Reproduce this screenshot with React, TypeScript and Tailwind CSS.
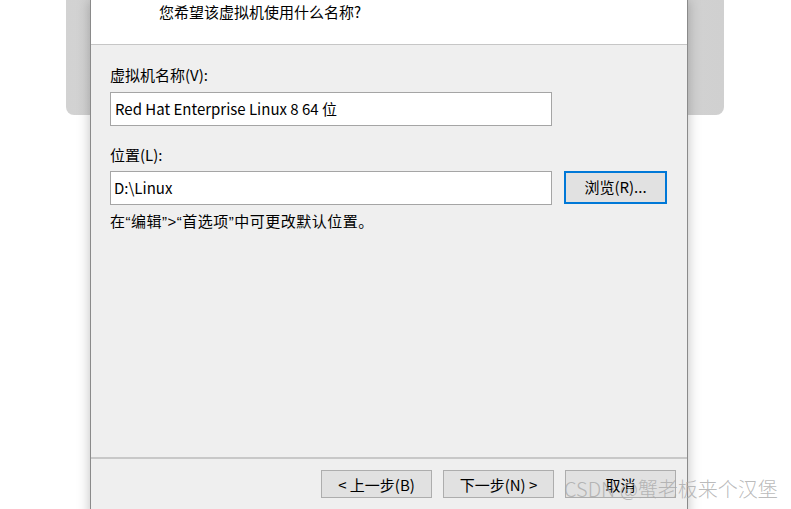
import React from 'react';

const font = { fontFamily: '"Segoe UI", "Noto Sans CJK SC", "Noto Sans", sans-serif' };

const DialogButton = ({ label }: { label: string }) => (
  <button className="h-[28px] w-[111px] border border-[#adadad] bg-[#e1e1e1] text-[15px] leading-none text-black">
    {label}
  </button>
);

// half-width quote marks like the Windows UI font
const Q = ({ children }: { children: React.ReactNode }) => (
  <span className="font-['Liberation_Sans',sans-serif]">{children}</span>
);

const App = () => {
  return (
    <div className="relative h-[509px] w-[791px] overflow-hidden bg-white" style={font}>
      {/* window behind the dialog */}
      <div className="absolute left-[66px] top-0 h-[115px] w-[658px] rounded-b-[8px] bg-gradient-to-r from-[#d2d2d2] via-[#dcdcdc] to-[#d0d0d0]" />

      <div className="relative ml-[90px] flex h-[520px] w-[598px] flex-col border-x border-[#8a8a8a] bg-[#efefef] shadow-[0_0_12px_rgba(0,0,0,0.25)]">
        <div className="flex h-[45px] border-b border-[#c6c6c6] bg-white pl-[68px]">
          <p className="pt-[1px] text-[15px] leading-[22px] text-black">您希望该虚拟机使用什么名称?</p>
        </div>

        <div className="flex h-[412px] flex-col px-[19px] pt-[19px]">
          <label className="text-[15px] leading-[22px] text-black">虚拟机名称(V):</label>
          <div className="mt-[6px] flex h-[34px] w-[442px] items-center border border-[#a5a5a5] bg-white px-[4px] text-[15px] text-black">
            Red Hat Enterprise Linux 8 64 位
          </div>

          <label className="mt-[18px] text-[15px] leading-[22px] text-black">位置(L):</label>
          <div className="mt-[5px] flex items-start gap-[12px]">
            <div className="flex h-[34px] w-[442px] items-center border border-[#a5a5a5] bg-white px-[3px] text-[15px] text-black">
              D:\Linux
            </div>
            <button className="h-[33px] w-[103px] border-2 border-[#0078d7] bg-[#e1e1e1] text-[15px] text-black">
              浏览(R)...
            </button>
          </div>
          <p className="mt-[5px] text-[15px] leading-[22px] tracking-[0.5px] text-black">
            在<Q>“</Q>编辑<Q>”&gt;“</Q>首选项<Q>”</Q>中可更改默认位置。
          </p>
        </div>

        <div className="border-t-2 border-[#c8c8c8] pt-[11px]">
          <div className="flex justify-end gap-[11px] pr-[11px]">
            <DialogButton label="< 上一步(B)" />
            <DialogButton label="下一步(N) >" />
            <DialogButton label="取消" />
          </div>
        </div>
      </div>

      {/* watermark */}
      <div className="absolute left-[564px] top-[477px] text-[20px] font-light leading-[24px] text-[#a8a8a8]/80">
        CSDN @蟹老板来个汉堡
      </div>
    </div>
  );
};

export default App;
